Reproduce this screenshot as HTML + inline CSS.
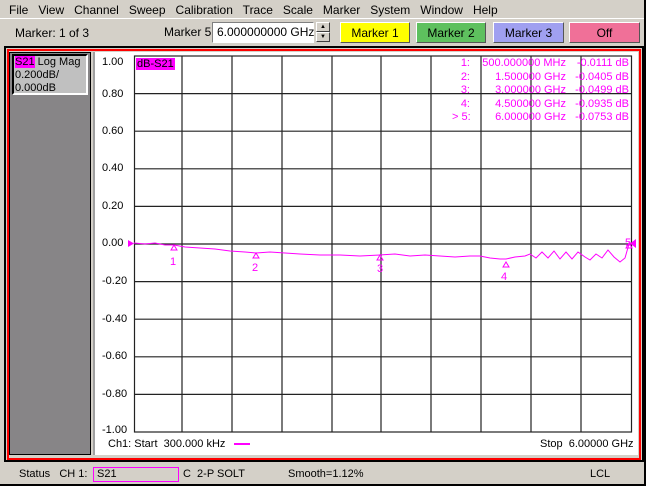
<!DOCTYPE html>
<html><head><meta charset="utf-8"><style>
*{margin:0;padding:0;box-sizing:border-box}
body{width:646px;height:486px;background:#d4d0c8;font-family:"Liberation Sans",sans-serif;font-size:11px;position:relative;overflow:hidden;color:#000}
.a{position:absolute;white-space:nowrap}
.btn{position:absolute;top:22px;height:21px;text-align:center;line-height:21px;font-size:12px;border:1px solid;border-color:#fff #555 #555 #fff}
.yl{position:absolute;left:102px;font-size:11px}
.mk{color:#ff00ff;font-size:11px}
</style></head><body>
<div class="a" style="left:0;top:0;width:646px;height:19px;border-bottom:1px solid #fff"></div>
<div class="a" style="left:9px;top:3px;font-size:12px;word-spacing:0">File&nbsp;&nbsp; View&nbsp;&nbsp; Channel&nbsp;&nbsp; Sweep&nbsp;&nbsp; Calibration&nbsp;&nbsp; Trace&nbsp;&nbsp; Scale&nbsp;&nbsp; Marker&nbsp;&nbsp; System&nbsp;&nbsp; Window&nbsp;&nbsp; Help</div>
<div class="a" style="left:15px;top:26px;font-size:12px">Marker: 1 of 3</div>
<div class="a" style="left:164px;top:25px;font-size:12px">Marker 5</div>
<div class="a" style="left:212px;top:22px;width:102px;height:21px;background:#fff;border:1px solid;border-color:#808080 #fff #fff #808080;font-size:12px;padding:2px 4px">6.000000000 GHz</div>
<div class="a" style="left:316px;top:22px;width:14px;height:10px;border:1px solid;border-color:#fff #404040 #404040 #fff;font-size:6px;text-align:center;line-height:8px">▲</div>
<div class="a" style="left:316px;top:32px;width:14px;height:10px;border:1px solid;border-color:#fff #404040 #404040 #fff;font-size:6px;text-align:center;line-height:8px">▼</div>
<div class="btn" style="left:340px;width:70px;background:#ffff00">Marker 1</div>
<div class="btn" style="left:416px;width:70px;background:#5ec05e">Marker 2</div>
<div class="btn" style="left:493px;width:71px;background:#a0a0f0">Marker 3</div>
<div class="btn" style="left:569px;width:71px;background:#f07098">Off</div>
<!-- main frame -->
<div class="a" style="left:4px;top:46px;width:640px;height:416px;border:2px solid #000;background:#d4d0c8"></div>
<div class="a" style="left:7px;top:49px;width:634px;height:411px;border:2px solid #ff0000"></div>
<div class="a" style="left:9px;top:52px;width:82px;height:403px;background:#878587;border:1px solid #000"></div>
<div class="a" style="left:12px;top:54px;width:76px;height:41px;background:#c0c0c0;border:2px solid;border-color:#000 #fff #fff #000;font-size:11px;line-height:13px;padding-left:1px">
<span style="background:#ff00ff">S21</span> Log Mag<br>0.200dB/<br>0.000dB</div>
<div class="a" style="left:93px;top:52px;width:545px;height:403px;background:#fff;border-left:2px solid #a0a0a0"></div>
<svg class="a" style="left:0;top:0" width="646" height="486">
<g stroke="#222" stroke-width="1.2" fill="none">
<rect x="134.5" y="56" width="497" height="376"/>
<path d="M182 56V432M232 56V432M282 56V432M332 56V432M381 56V432M431 56V432M481 56V432M531 56V432M581 56V432"/>
<path d="M134 93.6H631M134 131.2H631M134 168.8H631M134 206.4H631M134 244H631M134 281.6H631M134 319.2H631M134 356.8H631M134 394.4H631"/>
</g>
<polyline fill="none" stroke="#ff00ff" stroke-width="1" points="134,243 145,244 155,243 165,245 174,245 185,247 200,248 215,249 230,251 245,252 256,253 270,252 285,253 300,254 320,255 340,255 360,256 380,255 395,254 410,256 425,255 440,256 455,257 470,256 480,256 490,258 500,259 506,259 515,257 525,256 530,254 536,258 542,252 548,258 554,251 560,259 566,252 572,259 578,252 585,257 590,260 596,254 602,258 608,250 614,257 620,262 625,258 629,244"/>
<g fill="#ff00ff"><path d="M128 240L134 243.5L128 247Z"/><path d="M636 239L630 243.5L636 248Z"/></g>
<g fill="none" stroke="#ff00ff"><path d="M171 250L174 245L177 250Z"/><path d="M253 258L256 253L259 258Z"/><path d="M377 260L380 255L383 260Z"/><path d="M503 267L506 262L509 267Z"/><path d="M626 248L629 243L632 248Z"/></g>
<rect x="234" y="443" width="16" height="2" fill="#ff00ff"/>
</svg>
<div class="a mk" style="left:170px;top:256px">1</div>
<div class="a mk" style="left:252px;top:262px">2</div>
<div class="a mk" style="left:377px;top:263px">3</div>
<div class="a mk" style="left:501px;top:271px">4</div>
<div class="a mk" style="left:625px;top:237px">5</div>
<div class="yl" style="top:56px">1.00</div>
<div class="yl" style="top:88px">0.80</div>
<div class="yl" style="top:125px">0.60</div>
<div class="yl" style="top:162px">0.40</div>
<div class="yl" style="top:200px">0.20</div>
<div class="yl" style="top:237px">0.00</div>
<div class="yl" style="top:275px">-0.20</div>
<div class="yl" style="top:313px">-0.40</div>
<div class="yl" style="top:350px">-0.60</div>
<div class="yl" style="top:388px">-0.80</div>
<div class="yl" style="top:424px">-1.00</div>
<div class="a" style="left:136px;top:58px;background:#ff00ff;font-size:11px;padding:0 1px">dB-S21</div>
<div class="a mk" style="left:452px;top:57px;line-height:13.5px;text-align:right;width:18px">1:<br>2:<br>3:<br>4:<br>&gt; 5:</div>
<div class="a mk" style="left:470px;top:57px;line-height:13.5px;text-align:right;width:96px">500.000000 MHz<br>1.500000 GHz<br>3.000000 GHz<br>4.500000 GHz<br>6.000000 GHz</div>
<div class="a mk" style="left:570px;top:57px;line-height:13.5px;text-align:right;width:59px">-0.0111 dB<br>-0.0405 dB<br>-0.0499 dB<br>-0.0935 dB<br>-0.0753 dB</div>
<div class="a" style="left:108px;top:438px">Ch1: Start&nbsp; 300.000 kHz</div>
<div class="a" style="left:540px;top:438px">Stop&nbsp; 6.00000 GHz</div>
<!-- status -->
<div class="a" style="left:19px;top:468px;font-size:11px">Status&nbsp;&nbsp; CH 1:</div>
<div class="a" style="left:93px;top:467px;width:86px;height:15px;border:1px solid #ff00ff;font-size:11px;padding-left:3px;line-height:13px">S21</div>
<div class="a" style="left:183px;top:468px;font-size:11px">C&nbsp; 2-P SOLT</div>
<div class="a" style="left:288px;top:468px;font-size:11px">Smooth=1.12%</div>
<div class="a" style="left:590px;top:468px;font-size:11px">LCL</div>
<div class="a" style="left:0;top:484px;width:646px;height:2px;background:#000"></div>
<div class="a" style="left:644px;top:0;width:2px;height:486px;background:#000"></div>
</body></html>
